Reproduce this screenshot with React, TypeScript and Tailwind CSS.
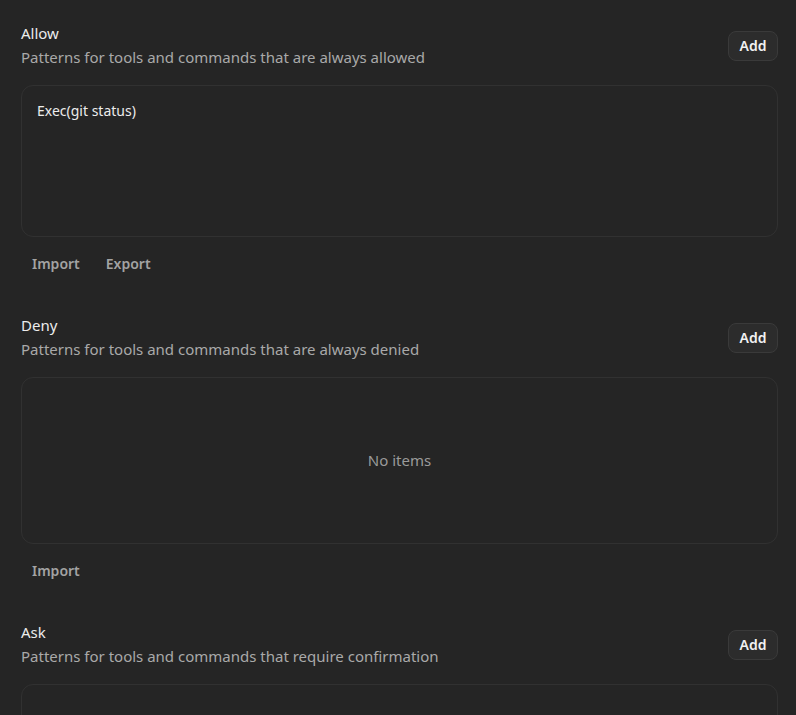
const sections = [
  {
    title: "Allow",
    desc: "Patterns for tools and commands that are always allowed",
    items: ["Exec(git status)"],
    actions: ["Import", "Export"],
  },
  {
    title: "Deny",
    desc: "Patterns for tools and commands that are always denied",
    items: [] as string[],
    actions: ["Import"],
  },
  {
    title: "Ask",
    desc: "Patterns for tools and commands that require confirmation",
    items: [] as string[],
    actions: ["Import"],
  },
];

function Section({ s }: { s: (typeof sections)[number] }) {
  return (
    <div className="mb-[37px]">
      <div className="flex items-center justify-between">
        <div>
          <h3 className="text-[15px] leading-5 text-[#ececec]">{s.title}</h3>
          <p className="mt-[3px] text-[15px] leading-[22px] text-[#a9a9a9]">{s.desc}</p>
        </div>
        <button className="h-[30px] w-[50px] rounded-lg border border-[#3a3a3a] bg-[#2c2c2c] text-[14px] font-semibold text-[#f2f2f2]">
          Add
        </button>
      </div>
      {s.items.length > 0 ? (
        <div className="mt-[17px] h-[152px] rounded-xl border border-[#313131] px-[15px] py-[15px]">
          {s.items.map((it) => (
            <div key={it} className="text-[14px] leading-5 text-[#ececec]">
              {it}
            </div>
          ))}
        </div>
      ) : (
        <div className="mt-[17px] flex h-[167px] items-center justify-center rounded-xl border border-[#313131] text-[15px] text-[#9a9a9a]">
          No items
        </div>
      )}
      <div className="mt-[11px] flex h-[30px] gap-[4px]">
        {s.actions.map((a) => (
          <button key={a} className="rounded-md px-[11px] text-[14px] font-semibold text-[#a3a3a3]">
            {a}
          </button>
        ))}
      </div>
    </div>
  );
}

export default function App() {
  return (
    <div
      className="min-h-[715px] bg-[#252525] pl-[21px] pr-[18px] pt-[23px]"
      style={{ fontFamily: '"Noto Sans", "Open Sans", sans-serif' }}
    >
      {sections.map((s) => (
        <Section key={s.title} s={s} />
      ))}
    </div>
  );
}
